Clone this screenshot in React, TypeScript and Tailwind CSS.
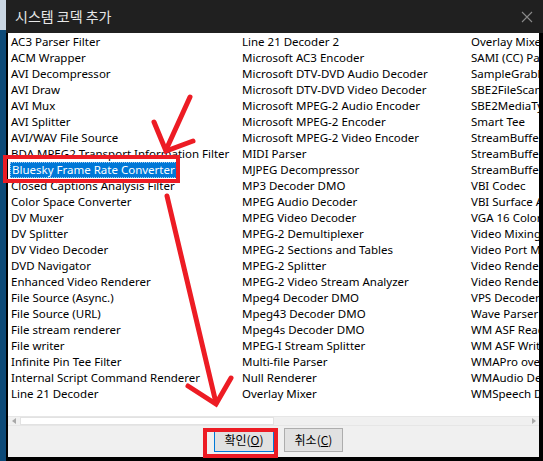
import React from 'react';

const COL1 = [
  'AC3 Parser Filter',
  'ACM Wrapper',
  'AVI Decompressor',
  'AVI Draw',
  'AVI Mux',
  'AVI Splitter',
  'AVI/WAV File Source',
  'BDA MPEG2 Transport Information Filter',
  'Bluesky Frame Rate Converter',
  'Closed Captions Analysis Filter',
  'Color Space Converter',
  'DV Muxer',
  'DV Splitter',
  'DV Video Decoder',
  'DVD Navigator',
  'Enhanced Video Renderer',
  'File Source (Async.)',
  'File Source (URL)',
  'File stream renderer',
  'File writer',
  'Infinite Pin Tee Filter',
  'Internal Script Command Renderer',
  'Line 21 Decoder',
];

const COL2 = [
  'Line 21 Decoder 2',
  'Microsoft AC3 Encoder',
  'Microsoft DTV-DVD Audio Decoder',
  'Microsoft DTV-DVD Video Decoder',
  'Microsoft MPEG-2 Audio Encoder',
  'Microsoft MPEG-2 Encoder',
  'Microsoft MPEG-2 Video Encoder',
  'MIDI Parser',
  'MJPEG Decompressor',
  'MP3 Decoder DMO',
  'MPEG Audio Decoder',
  'MPEG Video Decoder',
  'MPEG-2 Demultiplexer',
  'MPEG-2 Sections and Tables',
  'MPEG-2 Splitter',
  'MPEG-2 Video Stream Analyzer',
  'Mpeg4 Decoder DMO',
  'Mpeg43 Decoder DMO',
  'Mpeg4s Decoder DMO',
  'MPEG-I Stream Splitter',
  'Multi-file Parser',
  'Null Renderer',
  'Overlay Mixer',
];

const COL3 = [
  'Overlay Mixer2',
  'SAMI (CC) Parser',
  'SampleGrabber',
  'SBE2FileScan',
  'SBE2MediaTypeProfile',
  'Smart Tee',
  'StreamBufferSink',
  'StreamBufferSource',
  'StreamBufferSink2',
  'VBI Codec',
  'VBI Surface Allocator',
  'VGA 16 Color Ditherer',
  'Video Mixing Renderer 9',
  'Video Port Manager',
  'Video Renderer',
  'Video Renderer',
  'VPS Decoder',
  'Wave Parser',
  'WM ASF Reader',
  'WM ASF Writer',
  'WMAPro over S/PDIF DMO',
  'WMAudio Decoder DMO',
  'WMSpeech Decoder DMO',
];

const FONT = { fontFamily: '"Segoe UI", "Noto Sans", "Noto Sans CJK KR", sans-serif' };
const KR = { fontFamily: '"Noto Sans CJK KR", sans-serif' };

function Column({ items, width, selected }: { items: string[]; width: string; selected?: number }) {
  return (
    <div className={`flex flex-col shrink-0 ${width}`}>
      {items.map((name, i) =>
        i === selected ? (
          <div key={i} className="h-4 flex items-center">
            <span className="h-4 leading-[14px] px-[1px] -ml-[1px] bg-[#0078d7] text-white border border-dotted border-[#9cc9f0] whitespace-nowrap">
              {name}
            </span>
          </div>
        ) : (
          <div key={i} className="h-4 leading-4 whitespace-nowrap text-black">
            {name}
          </div>
        ),
      )}
    </div>
  );
}

export default function App() {
  return (
    <div className="relative w-[543px] h-[461px] flex overflow-hidden bg-black text-[11.5px]" style={FONT}>
      {/* desktop sliver */}
      <div className="w-[6px] flex flex-col shrink-0">
        <div className="h-[30px] bg-[#c9d6e2]" />
        <div className="flex-1 bg-[#0d4a78]" />
      </div>

      <div className="flex-1 flex flex-col min-w-0">
        {/* title bar */}
        <div className="h-[33px] shrink-0 bg-[#202020] flex items-center justify-between pl-[9px] pr-[10px]">
          <span className="text-[14px] text-[#e8e8e8]" style={KR}>
            시스템 코덱 추가
          </span>
          <svg width="12" height="12" viewBox="0 0 12 12" className="mt-[1px]">
            <path d="M1 1L11 11M11 1L1 11" stroke="#8a8a8a" strokeWidth="1.1" />
          </svg>
        </div>

        {/* body */}
        <div className="flex-1 flex flex-col ml-[2px] mr-[4px] mb-[4px] bg-[#f0f0f0] min-h-0">
          <div className="h-[383px] bg-white flex pl-[3px] pt-[1px] overflow-hidden">
            <Column items={COL1} width="w-[231px]" selected={8} />
            <Column items={COL2} width="w-[229px]" />
            <Column items={COL3} width="w-[200px]" />
          </div>

          {/* horizontal scrollbar */}
          <div className="h-[10px] flex bg-[#f0f0f0] border-y border-[#e6e6e6]">
            <div className="w-[12px] flex items-center justify-center">
              <svg width="4" height="6" viewBox="0 0 4 6">
                <path d="M4 0L0 3L4 6Z" fill="#a8a8a8" />
              </svg>
            </div>
            <div className="w-[254px] bg-white border border-[#e2e2e2]" />
            <div className="flex-1" />
            <div className="w-[10px] flex items-center justify-center">
              <svg width="4" height="6" viewBox="0 0 4 6">
                <path d="M0 0L4 3L0 6Z" fill="#a8a8a8" />
              </svg>
            </div>
          </div>

          {/* buttons */}
          <div className="flex-1 flex items-start justify-center gap-[10px] pt-[2px] pl-[10px]">
            <button className="w-[60px] h-[24px] border border-[#0078d7] bg-[#e1e1e1] text-black text-[12px] flex items-center justify-center" style={KR}>
              확인(<span className="underline">O</span>)
            </button>
            <button className="w-[59px] h-[24px] border border-[#adadad] bg-[#e1e1e1] text-black text-[12px] flex items-center justify-center" style={KR}>
              취소(<span className="underline">C</span>)
            </button>
          </div>
        </div>
      </div>

      {/* red annotations */}
      <div className="absolute left-[3px] top-[155px] w-[177px] h-[28px] border-[4px] border-[#ed1c24]" />
      <div className="absolute left-[203px] top-[428px] w-[75px] h-[30px] border-[4px] border-[#ed1c24]" />
      <svg className="absolute inset-0 pointer-events-none" width="543" height="461" viewBox="0 0 543 461">
        <g stroke="#ed1c24" strokeWidth="5" strokeLinecap="round" fill="none">
          <path d="M190 97L166 150" />
          <path d="M154 122L166 151L193 141" />
          <path d="M167 196L216 403" />
          <path d="M188 386L216 404L231 378" />
        </g>
      </svg>
    </div>
  );
}
